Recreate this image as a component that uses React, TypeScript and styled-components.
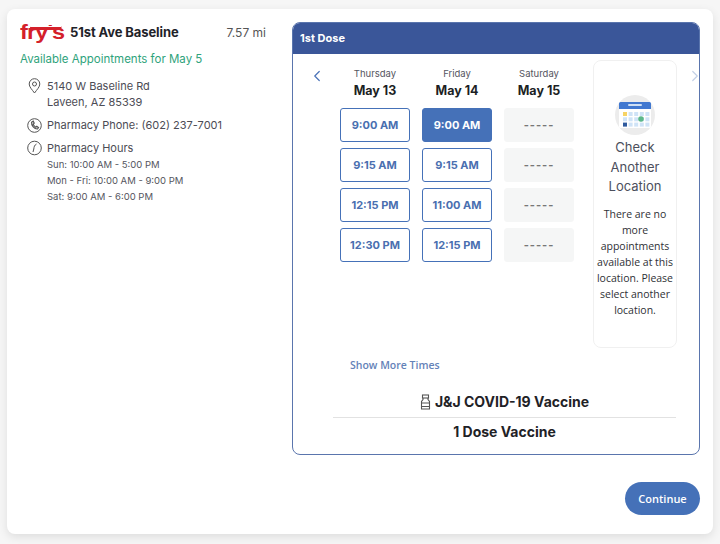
import styled, { createGlobalStyle } from 'styled-components';
import { ChevronLeft, ChevronRight } from 'lucide-react';

const GlobalStyle = createGlobalStyle`
  html, body {
    margin: 0;
    padding: 0;
    background: #f6f6f6;
    font-family: Inter, "Open Sans", sans-serif;
  }
`;

const Page = styled.div`
  width: 720px;
  height: 544px;
  box-sizing: border-box;
  padding: 9px 7px 10px;
  overflow: hidden;
`;

const Card = styled.div`
  height: 525px;
  box-sizing: border-box;
  background: #fff;
  border-radius: 8px;
  box-shadow: 0 3px 10px rgba(0, 0, 0, 0.1);
  padding: 13px 13px 19px;
  display: flex;
  flex-direction: column;
`;

const Top = styled.div`
  display: flex;
  gap: 13px;
`;

const Info = styled.div`
  width: 259px;
  flex: none;
`;

const TitleRow = styled.div`
  display: flex;
  align-items: center;
  height: 20px;
`;

const Logo = styled.div`
  position: relative;
  width: 42px;
  height: 20px;
  flex: none;
  margin-right: 8px;
  color: #d4202a;
  font-family: "Liberation Sans", sans-serif;
  font-weight: 700;
  font-size: 21px;
  line-height: 20px;
  letter-spacing: -0.8px;
  transform: scaleX(1.12);
  transform-origin: left center;
`;

const LogoBand = styled.span`
  position: absolute;
  left: 9px;
  top: 4px;
  width: 28px;
  height: 3px;
  background: #d4202a;
  border-top: 1px solid #fff;
`;

const StoreName = styled.div`
  flex: 1;
  font-size: 13px;
  font-weight: 700;
  color: #1f2329;
  letter-spacing: -0.1px;
`;

const Distance = styled.div`
  font-size: 12px;
  color: #555;
  margin-right: 13px;
`;

const Available = styled.div`
  margin-top: 9px;
  font-size: 11.5px;
  line-height: 16px;
  color: #2fa37c;
`;

const InfoList = styled.div`
  margin-top: 11px;
  padding-left: 7px;
  display: flex;
  flex-direction: column;
  gap: 7px;
`;

const InfoRow = styled.div`
  display: flex;
  gap: 5px;
  color: #4c4c55;
  font-size: 11px;
  line-height: 16px;
`;

const InfoIcon = styled.svg`
  width: 15px;
  height: 16px;
  flex: none;
`;

const Hours = styled.div`
  font-size: 9.5px;
  line-height: 16px;
  margin-top: 1px;
  color: #55555e;
`;

const Panel = styled.div`
  flex: 1;
  height: 433px;
  box-sizing: border-box;
  border: 1px solid #5a75ad;
  border-radius: 8px;
  overflow: hidden;
`;

const PanelHeader = styled.div`
  height: 32px;
  margin: -1px -1px 0;
  background: #3a5699;
  color: #fff;
  font-size: 11px;
  font-weight: 700;
  line-height: 32px;
  padding-left: 8px;
`;

const Slots = styled.div`
  display: flex;
  align-items: flex-start;
  padding-top: 6px;
`;

const NavSlot = styled.div<{ $width: number; $faded?: boolean }>`
  width: ${({ $width }) => $width}px;
  flex: none;
  display: flex;
  justify-content: center;
  padding-top: 7px;
  color: ${({ $faded }) => ($faded ? '#c3d0e6' : '#4a72b8')};
`;

const Days = styled.div`
  display: flex;
  gap: 12px;
  width: 233px;
  flex: none;
  margin-right: 20px;
`;

const DayColumn = styled.div`
  width: 70px;
  flex: none;
  display: flex;
  flex-direction: column;
  align-items: stretch;
`;

const DayName = styled.div`
  margin-top: 7px;
  text-align: center;
  font-size: 9.5px;
  line-height: 14px;
  color: #55555e;
`;

const DayDate = styled.div`
  text-align: center;
  font-size: 12.5px;
  font-weight: 700;
  line-height: 20px;
  color: #1c1f24;
  margin-bottom: 7px;
`;

const SlotList = styled.div`
  display: flex;
  flex-direction: column;
  gap: 6px;
`;

const SlotButton = styled.div<{ $selected?: boolean; $empty?: boolean }>`
  height: 34px;
  box-sizing: border-box;
  border-radius: 3px;
  display: flex;
  align-items: center;
  justify-content: center;
  font-size: 11px;
  font-weight: 700;
  border: 1px solid ${({ $selected, $empty }) => ($empty ? '#f5f6f6' : $selected ? '#4571b8' : '#4571b8')};
  background: ${({ $selected, $empty }) => ($empty ? '#f5f6f6' : $selected ? '#4571b8' : '#fff')};
  color: ${({ $selected, $empty }) => ($empty ? '#777' : $selected ? '#fff' : '#4a6fb0')};
  letter-spacing: ${({ $empty }) => ($empty ? '1px' : '0')};
`;

const SideCard = styled.div`
  width: 84px;
  height: 288px;
  flex: none;
  box-sizing: border-box;
  border: 1px solid #f0f0f0;
  border-radius: 8px;
  padding: 34px 2px 0;
  display: flex;
  flex-direction: column;
  align-items: center;
  text-align: center;
`;

const SideIcon = styled.svg`
  width: 40px;
  height: 40px;
  flex: none;
`;

const SideTitle = styled.div`
  margin-top: 3px;
  font-size: 13px;
  line-height: 19.5px;
  color: #4c4f5c;
`;

const SideText = styled.div`
  margin-top: 9px;
  font-size: 10.5px;
  line-height: 16px;
  color: #2f3136;
  font-family: "Open Sans", sans-serif;
`;

const ShowMore = styled.div`
  margin: 9px 0 0 57px;
  font-family: "Open Sans", sans-serif;
  font-size: 10.5px;
  font-weight: 600;
  line-height: 16px;
  color: #6482b8;
`;

const Vaccine = styled.div`
  margin: 0 23px 0 40px;
  text-align: center;
  color: #1f2226;
  font-size: 14px;
  font-weight: 700;
`;

const VaccineName = styled.div`
  margin-top: 19px;
  height: 25px;
  line-height: 20px;
  border-bottom: 1px solid #e2e2e2;
  display: flex;
  align-items: flex-start;
  justify-content: center;
  gap: 4px;
`;

const VialIcon = styled.svg`
  width: 11px;
  height: 16px;
  margin-top: 2px;
`;

const VaccineDose = styled.div`
  margin-top: 4px;
  line-height: 20px;
`;

const Footer = styled.div`
  margin-top: auto;
  display: flex;
  justify-content: flex-end;
`;

const ContinueButton = styled.button`
  width: 75px;
  height: 33px;
  border: none;
  border-radius: 17px;
  background: #4571b8;
  color: #fff;
  font-family: "Open Sans", sans-serif;
  font-size: 11px;
  font-weight: 600;
`;

const days = [
  { name: 'Thursday', date: 'May 13', slots: ['9:00 AM', '9:15 AM', '12:15 PM', '12:30 PM'] },
  { name: 'Friday', date: 'May 14', slots: ['9:00 AM', '9:15 AM', '11:00 AM', '12:15 PM'], selected: 0 },
  { name: 'Saturday', date: 'May 15', slots: ['-----', '-----', '-----', '-----'], empty: true },
];

const calendarCells = [0, 1, 2, 3, 4].flatMap((col) => [0, 1, 2].map((row) => ({ col, row })));

const cellColor = (col: number, row: number) => {
  if (col === 0 && row === 0) return '#f6d365';
  if (col === 0 && row === 2) return '#2f5a9e';
  return '#cfe3f7';
};

export default function App() {
  return (
    <>
      <GlobalStyle />
      <Page>
        <Card>
          <Top>
            <Info>
              <TitleRow>
                <Logo>
                  fry's
                  <LogoBand />
                </Logo>
                <StoreName>51st Ave Baseline</StoreName>
                <Distance>7.57 mi</Distance>
              </TitleRow>
              <Available>Available Appointments for May 5</Available>
              <InfoList>
                <InfoRow>
                  <InfoIcon viewBox="0 0 15 16" fill="none" stroke="#555" strokeWidth="1">
                    <path d="M7.5 15 C5 11.5 2.2 9 2.2 6 a5.3 5.3 0 0 1 10.6 0 C12.8 9 10 11.5 7.5 15Z" />
                    <circle cx="7.5" cy="6" r="2" />
                  </InfoIcon>
                  <div>
                    5140 W Baseline Rd
                    <br />
                    Laveen, AZ 85339
                  </div>
                </InfoRow>
                <InfoRow>
                  <InfoIcon viewBox="0 0 15 16" fill="none" stroke="#555" strokeWidth="1">
                    <circle cx="7.5" cy="8.5" r="6.8" />
                    <path d="M4.6 5.2 l1.6-1 1 2-1 1 c.3 1 1.2 2.2 2.6 3 l1-.9 1.7 1.4-1 1.3 c-3 .2-6.4-3.6-5.9-6.8Z" strokeWidth="1.2" />
                  </InfoIcon>
                  <div>Pharmacy Phone: (602) 237-7001</div>
                </InfoRow>
                <InfoRow>
                  <InfoIcon viewBox="0 0 15 16" fill="none" stroke="#555" strokeWidth="1">
                    <circle cx="7.5" cy="8" r="6.8" />
                    <path d="M9.5 4 C7.5 5 7 7 6.8 9 L6 12" />
                  </InfoIcon>
                  <div>
                    Pharmacy Hours
                    <Hours>
                      Sun: 10:00 AM - 5:00 PM
                      <br />
                      Mon - Fri: 10:00 AM - 9:00 PM
                      <br />
                      Sat: 9:00 AM - 6:00 PM
                    </Hours>
                  </div>
                </InfoRow>
              </InfoList>
            </Info>
            <Panel>
              <PanelHeader>1st Dose</PanelHeader>
              <Slots>
                <NavSlot $width={47}>
                  <ChevronLeft size={18} strokeWidth={1.6} />
                </NavSlot>
                <Days>
                  {days.map((day) => (
                    <DayColumn key={day.name}>
                      <DayName>{day.name}</DayName>
                      <DayDate>{day.date}</DayDate>
                      <SlotList>
                        {day.slots.map((slot, i) => (
                          <SlotButton key={i} $selected={day.selected === i} $empty={day.empty}>
                            {slot}
                          </SlotButton>
                        ))}
                      </SlotList>
                    </DayColumn>
                  ))}
                </Days>
                <SideCard>
                  <SideIcon viewBox="0 0 40 40">
                    <circle cx="20" cy="20" r="20" fill="#ececec" />
                    <rect x="4" y="7" width="32" height="26" rx="1.5" fill="#fff" />
                    <path d="M4 14 V8.5 A1.5 1.5 0 0 1 5.500 7 H34.500 A1.500 1.500 0 0 1 36 8.500 V14Z" fill="#4178d0" />
                    <rect x="13" y="9" width="14" height="2" rx="1" fill="#cfe0f5" />
                    {calendarCells.map(({ col, row }) => (
                      <rect
                        key={`${col}-${row}`}
                        x={8 + col * 5.6}
                        y={17 + row * 5.300}
                        width="4"
                        height="4"
                        fill={cellColor(col, row)}
                      />
                    ))}
                    <circle cx="26" cy="24" r="2.800" fill="#5cb88a" />
                  </SideIcon>
                  <SideTitle>
                    Check
                    <br />
                    Another
                    <br />
                    Location
                  </SideTitle>
                  <SideText>
                    There are no more appointments available at this location. Please select another location.
                  </SideText>
                </SideCard>
                <NavSlot $width={35} $faded>
                  <ChevronRight size={18} strokeWidth={1.6} />
                </NavSlot>
              </Slots>
              <ShowMore>Show More Times</ShowMore>
              <Vaccine>
                <VaccineName>
                  <VialIcon viewBox="0 0 11 16" fill="none" stroke="#555" strokeWidth="1.1">
                    <rect x="2.500" y="1" width="6" height="3" />
                    <path d="M3 4 v1.500 L1.500 7.500 V15 h8 V7.500 L8 5.500 V4" />
                    <path d="M1.500 9 h8 M1.500 12.500 h8" />
                  </VialIcon>
                  J&J COVID-19 Vaccine
                </VaccineName>
                <VaccineDose>1 Dose Vaccine</VaccineDose>
              </Vaccine>
            </Panel>
          </Top>
          <Footer>
            <ContinueButton>Continue</ContinueButton>
          </Footer>
        </Card>
      </Page>
    </>
  );
}
